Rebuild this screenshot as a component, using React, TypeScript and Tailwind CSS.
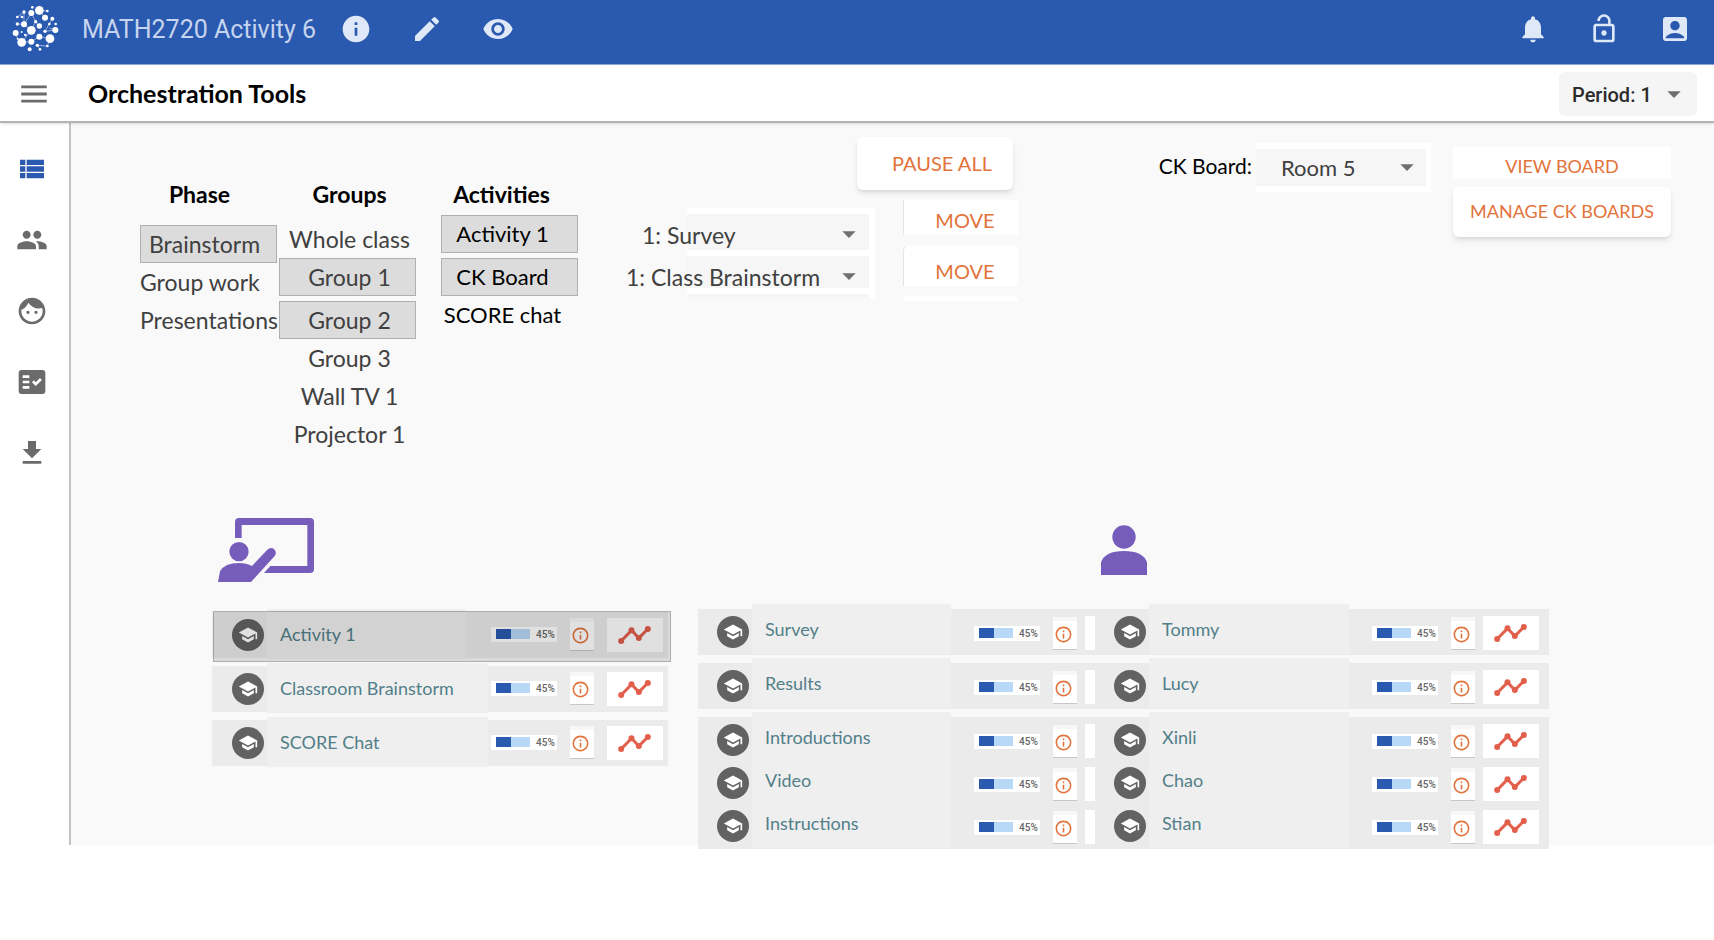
import React, { useState } from 'react';
import {
  MdAccountBox,
  MdArrowDropDown,
  MdDownload,
  MdEdit,
  MdFace,
  MdFactCheck,
  MdInfo,
  MdInfoOutline,
  MdLockOpen,
  MdMenu,
  MdNotifications,
  MdPeople,
  MdRemoveRedEye,
  MdSchool,
  MdViewList,
} from 'react-icons/md';

const navItems = [
  { label: 'Activities', Icon: MdViewList },
  { label: 'Groups', Icon: MdPeople },
  { label: 'Students', Icon: MdFace },
  { label: 'Grading', Icon: MdFactCheck },
  { label: 'Export', Icon: MdDownload },
];

const phases = ['Brainstorm', 'Group work', 'Presentations'];
const groups = ['Whole class', 'Group 1', 'Group 2', 'Group 3', 'Wall TV 1', 'Projector 1'];
const activities = ['Activity 1', 'CK Board', 'SCORE chat'];
const classActivities = ['Activity 1', 'Classroom Brainstorm', 'SCORE Chat'];

// each block is a separate card; rows inside a block are joined
const studentBlocks = [
  [['Survey', 'Tommy']],
  [['Results', 'Lucy']],
  [
    ['Introductions', 'Xinli'],
    ['Video', 'Chao'],
    ['Instructions', 'Stian'],
  ],
];

const Logo = () => (
  <svg viewBox="0 0 210 210" className="w-[70px] h-[70px] self-start" fill="white" stroke="white">
    <g strokeWidth="2.5" opacity="0.6">
      <path d="M94 91 L72 73 L94 39 M94 91 L107 65 L96 42 M118 78 L107 65 M118 110 L150 116 M94 91 L65 127 M94 125 L65 127 M118 110 L94 125 M135 53 L118 31 L142 33 M72 73 L52 72 M72 36 L52 51 M166 90 L135 94 L157 56 M112 136 L142 138 L150 116 M112 136 L120 148 M47 99 L53 116 M72 73 L72 36 M166 90 L148 84" fill="none" />
    </g>
    <g stroke="none">
      <circle cx="118" cy="31" r="13" />
      <circle cx="94" cy="39" r="9" />
      <circle cx="97" cy="22" r="4" />
      <circle cx="142" cy="33" r="4" />
      <circle cx="72" cy="36" r="5" />
      <circle cx="135" cy="53" r="9" />
      <circle cx="157" cy="56" r="6" />
      <circle cx="52" cy="51" r="4" />
      <circle cx="66" cy="51" r="4" />
      <circle cx="107" cy="65" r="5" />
      <circle cx="72" cy="73" r="9" />
      <circle cx="52" cy="72" r="5" />
      <circle cx="118" cy="78" r="8" />
      <circle cx="148" cy="72" r="4" />
      <circle cx="167" cy="72" r="4" />
      <circle cx="94" cy="91" r="13" />
      <circle cx="47" cy="99" r="9" />
      <circle cx="135" cy="94" r="5" />
      <circle cx="166" cy="90" r="9" />
      <circle cx="65" cy="96" r="3" />
      <circle cx="76" cy="105" r="4" />
      <circle cx="118" cy="110" r="9" />
      <circle cx="150" cy="116" r="13" />
      <circle cx="65" cy="127" r="13" />
      <circle cx="94" cy="125" r="9" />
      <circle cx="53" cy="116" r="3" />
      <circle cx="112" cy="136" r="5" />
      <circle cx="142" cy="138" r="4" />
      <circle cx="89" cy="148" r="6" />
      <circle cx="120" cy="148" r="4" />
    </g>
  </svg>
);

const TeacherIcon = () => (
  <svg viewBox="0 0 288 192" className="w-24 h-16" fill="#775dbb">
    <path d="M51 60V12Q51 0 63 0H276Q288 0 288 12V153Q288 165 276 165H138L157 144H268V21H71V60Z" />
    <circle cx="63" cy="101" r="29" />
    <path d="M0 192L6 160Q20 135 63 135Q85 135 102 144L148 95Q158 86 168 93Q178 103 170 114L99 192Z" />
  </svg>
);

const StudentIcon = () => (
  <svg viewBox="0 0 138 150" className="w-[46px] h-[50px]" fill="#775dbb">
    <circle cx="69" cy="36" r="35" />
    <path d="M0 150V112Q12 78 69 78Q126 78 138 112V150Z" />
  </svg>
);

const Avatar = () => (
  <span className="flex size-8 shrink-0 items-center justify-center rounded-full bg-[#626262] text-white">
    <MdSchool size={20} />
  </span>
);

const ProgressBadge = ({ value }: { value: number }) => (
  <div className="flex h-[15px] w-[66px] shrink-0 items-center bg-white pl-[5px] font-[Roboto] text-[10px] font-medium text-[#666]">
    <div role="progressbar" aria-valuenow={value} className="mr-[6px] h-[10px] w-[34px] bg-[#b8d8f7]">
      <div className="h-full bg-[#2a59b0]" style={{ width: `${value}%` }} />
    </div>
    {value}%
  </div>
);

const InfoButton = () => (
  <button
    aria-label="Info"
    className="flex h-[33px] w-6 shrink-0 items-center justify-center border-t-4 border-b border-t-[#f7f7f7] border-b-[#c8c8c8] bg-white pr-[3px] text-[#e2733b]"
  >
    <MdInfoOutline size={19} className="shrink-0" />
  </button>
);

const ChartButton = () => (
  <button aria-label="Chart" className="flex h-[34px] w-14 shrink-0 items-center justify-center bg-white pr-[2px]">
    <svg viewBox="0 0 98 54" className="h-[18px] w-[33px]" fill="#e15f4b" stroke="#e15f4b">
      <path d="M9 45L40 13L62 36L89 9" fill="none" strokeWidth="9" />
      <g stroke="none">
        <circle cx="9" cy="45" r="9" />
        <circle cx="40" cy="13" r="9" />
        <circle cx="62" cy="36" r="9" />
        <circle cx="89" cy="9" r="9" />
      </g>
    </svg>
  </button>
);

interface OptionListProps {
  title: string;
  options: string[];
  initial: string[];
  titleClass: string;
  optionClass: string;
  selectedClass?: string;
}

const OptionList: React.FC<OptionListProps> = ({ title, options, initial, titleClass, optionClass, selectedClass = '' }) => {
  const [selected, setSelected] = useState(initial);

  const toggle = (name: string) => {
    setSelected(selected.includes(name) ? selected.filter((s) => s !== name) : [...selected, name]);
  };

  return (
    <div className="flex w-[137px] flex-col">
      <h2 className={`text-center text-[23px] leading-7 font-bold text-black ${titleClass}`}>{title}</h2>
      {options.map((name, i) => {
        const isSelected = selected.includes(name);
        const joined = isSelected && i > 0 && selected.includes(options[i - 1]);
        return (
          <button
            key={name}
            aria-pressed={isSelected}
            onClick={() => toggle(name)}
            className={`h-[38px] leading-7 whitespace-nowrap ${optionClass} ${
              isSelected ? `border border-[#b0b0b0] bg-[#dcdcdc] ${selectedClass}` : ''
            } ${joined ? 'mt-[5px]' : ''}`}
          >
            {name}
          </button>
        );
      })}
    </div>
  );
};

const ActivityRow = ({ name, active }: { name: string; active: boolean }) => (
  <div className="relative flex h-[46px] items-center bg-[#ebebeb]">
    <div className="w-[55px] shrink-0 pl-5">
      <Avatar />
    </div>
    <div className={`-mt-[2px] flex h-[50px] min-w-0 flex-1 items-center bg-[#efefef] pl-[13px] ${active ? 'mr-[22px]' : ''}`}>
      <a href="#" className="text-lg whitespace-nowrap text-[#527f89]">{name}</a>
    </div>
    <div className="flex items-center pr-[5px] pl-[3px]">
      <div className="mr-[13px] flex items-center gap-[13px] pb-[2px]">
        <ProgressBadge value={45} />
        <InfoButton />
      </div>
      <ChartButton />
    </div>
    {active && (
      <div className="pointer-events-none absolute -top-px -right-[3px] -bottom-1 left-px border border-black/20 bg-black/12" />
    )}
  </div>
);

const StudentCell = ({ name, children, className }: { name: string; children: React.ReactNode; className: string }) => (
  <div className={`flex h-full min-w-0 items-center ${className}`}>
    <div className="w-[54px] shrink-0 pl-[19px]">
      <Avatar />
    </div>
    <div className="-mt-[6px] flex h-[50px] min-w-0 flex-1 items-center bg-[#efefef] pl-[13px]">
      <a href="#" className="text-lg whitespace-nowrap text-[#527f89]">{name}</a>
    </div>
    <div className="flex items-center pt-[2px] pl-[23px]">
      <ProgressBadge value={45} />
      <div className="mr-[8px] ml-[13px]">
        <InfoButton />
      </div>
      {children}
    </div>
  </div>
);

export default function App() {
  return (
    <div className="min-h-screen bg-white font-['Lato',sans-serif]">
      <header className="flex h-[65px] items-center border-b border-[#8ea9d8] bg-[#2a59b0] pr-[23px] pb-[6px] text-[#dfe8f6]">
        <Logo />
        <h1 className="ml-3 pt-[2px] font-[Roboto] text-[25px] text-[#c6d5ee]">MATH2720 Activity 6</h1>
        <div className="ml-6 flex gap-[39px]">
          <button aria-label="Info"><MdInfo size={32} /></button>
          <button aria-label="Edit"><MdEdit size={32} /></button>
          <button aria-label="Preview"><MdRemoveRedEye size={32} /></button>
        </div>
        <div className="ml-auto flex gap-[39px]">
          <button aria-label="Notifications"><MdNotifications size={32} /></button>
          <button aria-label="Unlock"><MdLockOpen size={32} /></button>
          <button aria-label="Account"><MdAccountBox size={32} /></button>
        </div>
      </header>

      <div className="relative flex h-[58px] items-center border-b-2 border-[#b4b4b4] pt-[2px] pr-[17px] pl-[17px] shadow-sm">
        <button aria-label="Menu" className="text-[#6b6b6b]"><MdMenu size={34} /></button>
        <h2 className="ml-[37px] text-[25px] font-bold text-black">Orchestration Tools</h2>
        <div className="relative ml-auto">
          <select
            aria-label="Period"
            className="h-11 w-[138px] appearance-none rounded-md bg-[#f5f5f5] pt-[2px] pl-[13px] font-[Roboto] text-[20px] font-medium text-[#2c2c2c]"
          >
            <option>Period: 1</option>
            <option>Period: 2</option>
          </select>
          <MdArrowDropDown size={32} className="pointer-events-none absolute top-[6px] right-[7px] text-[#6f6f6f]" />
        </div>
      </div>

      <div className="flex">
        <nav className="flex w-[71px] shrink-0 flex-col gap-[39px] border-r-2 border-[#c4c4c4] pt-[30px] pl-4">
          {navItems.map(({ label, Icon }, i) => (
            <button key={label} aria-label={label} className={`w-8 ${i === 0 ? 'text-[#2a59b0]' : 'text-[#6b6b6b]'}`}>
              <Icon size={32} />
            </button>
          ))}
        </nav>

        <main className="min-w-0 flex-1 bg-[#f9f9f9]">
          <div className="flex h-[395px] items-start pr-[43px] pl-[69px]">
            <div className="flex shrink-0 gap-[2px] pt-[57px] text-[23px] text-[#404040]">
              <OptionList
                title="Phase"
                options={phases}
                initial={['Brainstorm']}
                titleClass="mb-[17px] pr-[18px]"
                optionClass="text-left"
                selectedClass="pl-2"
              />
              <OptionList
                title="Groups"
                options={groups}
                initial={['Group 1', 'Group 2']}
                titleClass="mb-[12px] pl-1"
                optionClass="pl-1"
              />
              <div className="ml-[23px] text-[22px] text-black">
                <OptionList
                  title="Activities"
                  options={activities}
                  initial={['Activity 1', 'CK Board']}
                  titleClass="mb-[7px] pr-4"
                  optionClass="pr-[14px]"
                />
              </div>
            </div>

            <div className="ml-[109px] shrink-0 pt-[14px]">
              <button className="ml-[170px] block h-[53px] w-[156px] rounded-md bg-white pb-[2px] pl-[14px] text-[20px] text-[#e2733b] shadow-md">
                PAUSE ALL
              </button>
              <div className="mt-[10px] flex items-start">
                <div className="mt-2 flex w-[188px] flex-col gap-[6px] bg-white pt-[6px] pr-[6px] text-[23px] text-[#404040]">
                  <div className="relative h-9 bg-[#f6f6f6]">
                    <select aria-label="Group 1 activity" className="-ml-[61px] h-[42px] w-[243px] appearance-none pl-4">
                      <option>1: Survey</option>
                    </select>
                    <MdArrowDropDown size={32} className="pointer-events-none absolute top-1 right-1 text-[#6f6f6f]" />
                  </div>
                  <div className="relative h-8 bg-[#f6f6f6]">
                    <select aria-label="Group 2 activity" className="-ml-[61px] h-[42px] w-[243px] appearance-none">
                      <option>1: Class Brainstorm</option>
                    </select>
                    <MdArrowDropDown size={32} className="pointer-events-none absolute top-1 right-1 text-[#6f6f6f]" />
                  </div>
                  <div className="h-[5px] bg-[#f6f6f6]" />
                </div>
                <div className="ml-7 flex w-[115px] flex-col gap-[10px] text-[20px] text-[#e2733b]">
                  <button className="h-[35px] border-l border-[#e4e4e4] bg-white pt-1 pl-2">MOVE</button>
                  <button className="h-[41px] rounded-t-md border-l border-[#e4e4e4] bg-white pt-[10px] pl-2">MOVE</button>
                  <div className="h-[5px] rounded-t-md bg-white" />
                </div>
              </div>
            </div>

            <div className="ml-auto flex shrink-0 items-start pt-5">
              <label htmlFor="board" className="mr-1 pt-[7px] text-[21px] text-black">CK Board:</label>
              <div className="relative bg-white py-[6px] pr-[5px]">
                <select id="board" className="h-[37px] w-[170px] appearance-none bg-[#f6f6f6] pl-[25px] text-[22px] text-[#404040]">
                  <option>Room 5</option>
                </select>
                <MdArrowDropDown size={32} className="pointer-events-none absolute top-2 right-2 text-[#6f6f6f]" />
              </div>
              <div className="mt-1 ml-[22px] flex w-[218px] flex-col gap-2 text-[18px] text-[#e2733b]">
                <button className="h-8 bg-white pt-[6px]">VIEW BOARD</button>
                <button className="h-[50px] rounded-md bg-white pb-[2px] whitespace-nowrap shadow-md">MANAGE CK BOARDS</button>
              </div>
            </div>
          </div>

          <div className="flex gap-[30px] pr-[165px] pl-[141px]">
            <section className="min-w-0 flex-[456_1_0%]">
              <div className="h-[94px] pl-[6px]">
                <TeacherIcon />
              </div>
              <div className="flex flex-col gap-2">
                {classActivities.map((name, i) => (
                  <ActivityRow key={name} name={name} active={i === 0} />
                ))}
              </div>
            </section>

            <section className="-mb-1 min-w-0 flex-[851_1_0%]">
              <div className="flex h-[91px] justify-end pt-[7px] pr-[402px]">
                <StudentIcon />
              </div>
              <div className="flex flex-col gap-2">
                {studentBlocks.map((rows) => (
                  <div key={rows[0][0]} className="flex flex-col -space-y-[3px] bg-[#ebebeb]">
                    {rows.map(([task, student]) => (
                      <div key={task} className="flex h-[46px]">
                        <StudentCell name={task} className="flex-[397_1_0%]">
                          <div className="h-[34px] w-[10px] bg-white" />
                        </StudentCell>
                        <StudentCell name={student} className="flex-[454_1_0%]">
                          <div className="pr-[10px]">
                            <ChartButton />
                          </div>
                        </StudentCell>
                      </div>
                    ))}
                  </div>
                ))}
              </div>
            </section>
          </div>
        </main>
      </div>
    </div>
  );
}
